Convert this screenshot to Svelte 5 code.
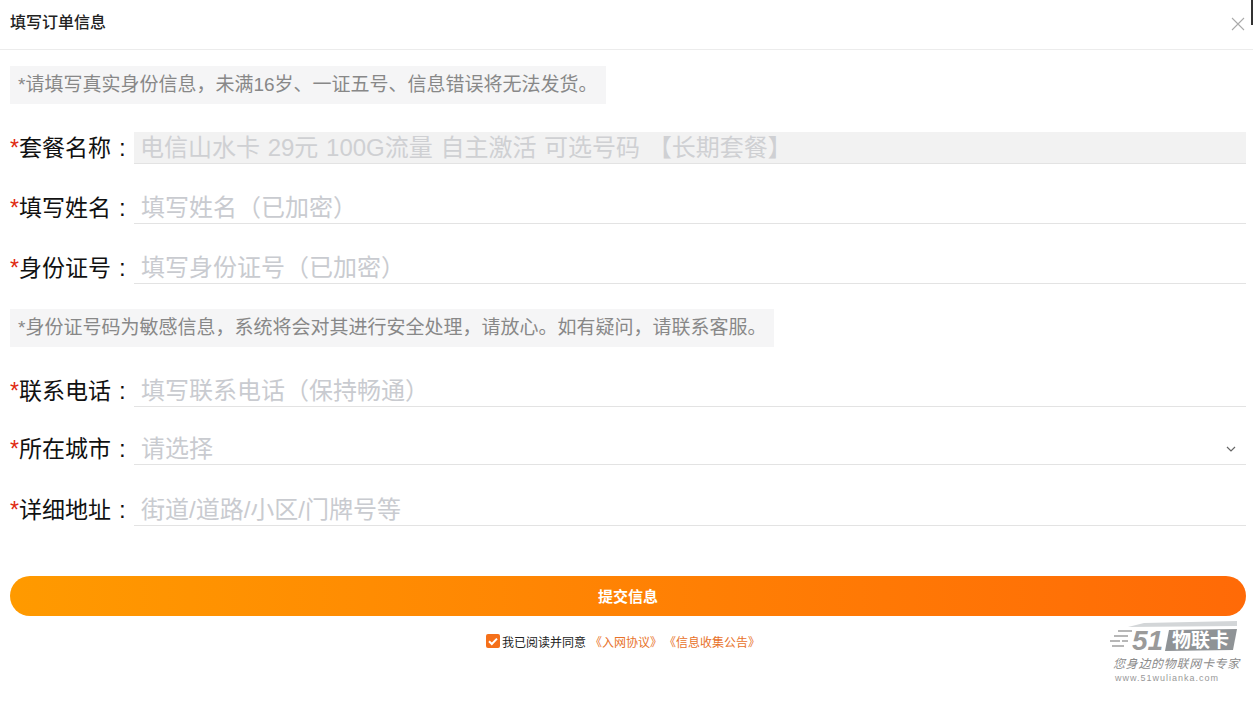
<script>
  const fields = [
    { label: '套餐名称', placeholder: '电信山水卡 29元 100G流量 自主激活 可选号码 【长期套餐】', disabled: true, top: 28 },
    { label: '填写姓名', placeholder: '填写姓名（已加密）', top: 28 },
    { label: '身份证号', placeholder: '填写身份证号（已加密）', top: 28 }
  ]
  const fields2 = [
    { label: '联系电话', placeholder: '填写联系电话（保持畅通）', top: 28 },
    { label: '所在城市', placeholder: '请选择', select: true, top: 26 },
    { label: '详细地址', placeholder: '街道/道路/小区/门牌号等', top: 29 }
  ]
</script>

{#snippet row(f)}
  <div class="row" style="margin-top: {f.top}px">
    <span class="label"><i>*</i>{f.label}<b>:</b></span>
    <div class="field" class:disabled={f.disabled}>
      <span>{f.placeholder}</span>
      {#if f.select}
        <svg class="chevron" width="10" height="6" viewBox="0 0 10 6"><path d="M1 1l4 4 4-4" fill="none" stroke="#666" stroke-width="1.2" /></svg>
      {/if}
    </div>
  </div>
{/snippet}

<div class="page">
  <span class="corner"></span>
  <header>
    <h1>填写订单信息</h1>
    <svg class="close" width="14" height="14" viewBox="0 0 14 14"><path d="M1 1l12 12M13 1L1 13" stroke="#aaa" stroke-width="1.1" /></svg>
  </header>

  <div class="form">
    <p class="notice first">*请填写真实身份信息，未满16岁、一证五号、信息错误将无法发货。</p>
    {#each fields as f}
      {@render row(f)}
    {/each}
    <p class="notice second">*身份证号码为敏感信息，系统将会对其进行安全处理，请放心。如有疑问，请联系客服。</p>
    {#each fields2 as f}
      {@render row(f)}
    {/each}

    <button>提交信息</button>

    <div class="agree">
      <span class="check">
        <svg width="14" height="14" viewBox="0 0 14 14"><path d="M3 7.2l2.8 2.8L11 4.6" fill="none" stroke="#fff" stroke-width="2" /></svg>
      </span>
      <span>我已阅读并同意</span>
      <a href="#a">《入网协议》</a>
      <a href="#b">《信息收集公告》</a>
    </div>
  </div>

  <div class="logo">
    <svg width="132" height="38" viewBox="0 0 132 38">
      <path d="M36 5 L129 3 L129 8 L20 9Z" fill="#d3d6d8" />
      <path d="M10 13h14M6 18h14M2 23h10M14 23h6M4 28h12" fill="none" stroke="#a0a0a0" stroke-width="1.5" />
      <text x="24" y="32" class="logo-num">51</text>
      <path d="M61 12 L129 11 L125 32 L57 33Z" fill="#8f9396" />
      <text x="64" y="29" class="logo-title">物联卡</text>
    </svg>
    <div class="slogan">您身边的物联网卡专家</div>
    <div class="url">www.51wulianka.com</div>
  </div>
</div>

<style>
  :global(body) {
    background: #fff;
  }

  .page {
    position: relative;
    height: 723px;
    overflow: hidden;
    font-family: "Liberation Sans", "Noto Sans CJK SC", sans-serif;
  }

  .corner {
    position: absolute;
    top: 0;
    right: 0;
    width: 2px;
    height: 25px;
    background: #333;
  }

  header {
    display: flex;
    align-items: center;
    justify-content: space-between;
    box-sizing: border-box;
    height: 50px;
    padding: 0 8px 0 10px;
    border-bottom: 1px solid #ececec;
  }

  h1 {
    margin: 0 0 7px;
    font-size: 16px;
    font-weight: 500;
    color: #222;
  }

  .close {
    margin-bottom: 2px;
  }

  .form {
    padding: 0 7px 0 10px;
  }

  .notice {
    box-sizing: border-box;
    width: fit-content;
    height: 38px;
    margin: 0;
    padding: 0 8px;
    background: #f5f5f6;
    color: #888;
    font-size: 19px;
    line-height: 38px;
  }

  .first {
    margin-top: 16px;
  }

  .second {
    margin-top: 25px;
  }

  .row {
    display: flex;
    align-items: flex-end;
  }

  .label {
    display: flex;
    flex: none;
    width: 124px;
    font-size: 23px;
    line-height: 32px;
    color: #111;
    white-space: nowrap;
  }

  .label i {
    width: 9px;
    color: #e02a10;
    font-style: normal;
  }

  .label b {
    margin-left: 8px;
    font-weight: 400;
    font-size: 24px;
  }

  .field {
    position: relative;
    flex: 1;
    box-sizing: border-box;
    height: 32px;
    padding-left: 7px;
    border-bottom: 1px solid #e3e3e3;
    color: #c9cbd0;
    font-size: 24px;
    line-height: 32px;
    white-space: nowrap;
  }

  .field.disabled {
    padding-left: 6px;
    background: #f2f2f2;
    color: #cfd0d3;
    word-spacing: 1px;
  }

  .chevron {
    position: absolute;
    right: 10px;
    top: 13px;
  }

  button {
    display: block;
    width: 100%;
    height: 40px;
    margin-top: 50px;
    padding: 0 0 2px;
    border: 0;
    border-radius: 20px;
    background: linear-gradient(90deg, #ff9a00, #ff6a07);
    color: #fff;
    font-family: inherit;
    font-size: 15px;
    font-weight: 700;
  }

  .agree {
    display: flex;
    align-items: center;
    justify-content: center;
    gap: 2px;
    height: 20px;
    margin-top: 15px;
    padding-right: 10px;
    color: #222;
    font-size: 12px;
  }

  .agree a {
    color: #e8722a;
    text-decoration: none;
  }

  .agree a:first-of-type {
    margin-left: 2px;
  }

  .check {
    display: flex;
    width: 14px;
    height: 14px;
    border-radius: 2px;
    background: #f5701a;
  }

  .logo {
    position: absolute;
    right: 13px;
    top: 618px;
    width: 132px;
  }

  .logo svg {
    display: block;
  }

  .logo-num {
    font-size: 28px;
    font-weight: 700;
    font-style: italic;
    fill: #9a9a9a;
  }

  .logo-title {
    font-size: 19px;
    font-weight: 700;
    fill: #fff;
  }

  .slogan {
    padding-left: 5px;
    font-size: 12px;
    line-height: 16px;
    font-style: italic;
    letter-spacing: 0.7px;
    color: #8a8a8a;
    white-space: nowrap;
  }

  .url {
    padding-left: 7px;
    font-size: 9px;
    letter-spacing: 1px;
    line-height: 12px;
    color: #999;
  }
</style>
